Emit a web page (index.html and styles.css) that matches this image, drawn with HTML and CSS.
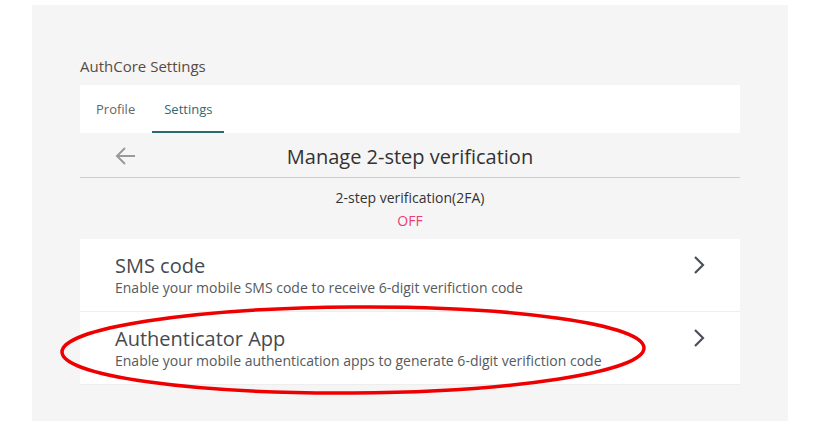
FILE: index.html
```html
<!DOCTYPE html>
<html>
<head>
<meta charset="utf-8">
<link rel="stylesheet" href="styles.css">
</head>
<body>
<div class="panel">
  <div class="app-title">AuthCore Settings</div>
  <nav class="tabs">
    <span class="tab">Profile</span>
    <span class="tab active">Settings</span>
  </nav>
  <div class="header">
    <svg class="back" width="22" height="20" viewBox="0 0 22 20"><path d="M21 10H3M11 2L3 10l8 8" fill="none" stroke="#9a9a9a" stroke-width="2"/></svg>
    <h1 class="header-title">Manage 2-step verification</h1>
  </div>
  <div class="status">
    <div class="status-label">2-step verification(2FA)</div>
    <div class="status-value">OFF</div>
  </div>
  <div class="options">
    <div class="option">
      <div class="option-text">
        <div class="option-title">SMS code</div>
        <div class="option-desc">Enable your mobile SMS code to receive 6-digit verifiction code</div>
      </div>
      <svg class="chev" width="14" height="20" viewBox="0 0 14 20"><path d="M3 2l8 8-8 8" fill="none" stroke="#4b5058" stroke-width="2.2"/></svg>
    </div>
    <div class="option">
      <div class="option-text">
        <div class="option-title">Authenticator App</div>
        <div class="option-desc">Enable your mobile authentication apps to generate 6-digit verifiction code</div>
      </div>
      <svg class="chev" width="14" height="20" viewBox="0 0 14 20"><path d="M3 2l8 8-8 8" fill="none" stroke="#4b5058" stroke-width="2.2"/></svg>
    </div>
  </div>
</div>
<svg class="annotation" width="610" height="104" viewBox="0 0 610 104"><ellipse cx="298" cy="50" rx="291" ry="43" fill="none" stroke="#ee0000" stroke-width="3.5" transform="rotate(-0.4 298 50)"/></svg>
</body>
</html>
```
FILE: styles.css
```css
html, body {
  margin: 0;
  padding: 0;
  background: #ffffff;
  font-family: "Open Sans", "Noto Sans", sans-serif;
}
.panel {
  margin: 5px 0 0 32px;
  width: 756px;
  height: 416px;
  box-sizing: border-box;
  padding: 51px 48px 0;
  background: #f5f5f5;
}
.app-title {
  font-size: 15px;
  line-height: 21px;
  color: #5a4a44;
  margin-bottom: 8px;
}
.tabs {
  display: flex;
  height: 48px;
  background: #ffffff;
  padding-left: 4px;
  gap: 5px;
}
.tab {
  display: flex;
  align-items: center;
  padding: 0 12px;
  font-size: 13px;
  color: #666666;
  border-bottom: 2px solid transparent;
  padding-top: 2px;
}
.tab.active {
  color: #2f6a73;
  border-bottom-color: #2c6a72;
}
.header {
  display: flex;
  align-items: center;
  border-bottom: 1px solid #cccccc;
  padding-top: 2px;
  box-sizing: border-box;
  height: 45px;
}
.back {
  margin-left: 34px;
}
.header-title {
  flex: 1;
  margin: 0 56px 0 0;
  text-align: center;
  font-weight: normal;
  font-size: 20px;
  color: #333333;
}
.status {
  padding-top: 8px;
  height: 61px;
  box-sizing: border-box;
  text-align: center;
  font-size: 14px;
  line-height: 23px;
}
.status-label {
  color: #333333;
}
.status-value {
  color: #ec3c72;
}
.option {
  display: flex;
  align-items: center;
  background: #ffffff;
  height: 73px;
  box-sizing: border-box;
  border-bottom: 1px solid #eeeeee;
  padding: 0 34px 0 35px;
}
.option-text {
  flex: 1;
}
.option-title {
  font-size: 20px;
  line-height: 26px;
  color: #454a4f;
}
.option-desc {
  font-size: 14px;
  line-height: 18px;
  color: #555a60;
}
.chev {
  align-self: flex-start;
  margin-top: 16px;
}
.annotation {
  position: absolute;
  left: 55px;
  top: 300px;
}
```
